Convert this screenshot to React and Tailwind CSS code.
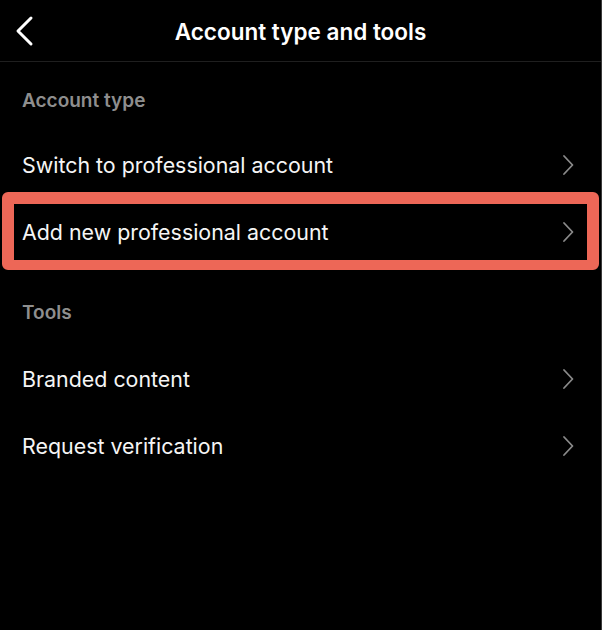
import React from "react";

const font = { fontFamily: "Inter, 'Noto Sans', 'Liberation Sans', sans-serif" };

function ChevronRight() {
  return (
    <svg width="14" height="22" viewBox="0 0 14 22" fill="none" className="shrink-0">
      <path d="M3 2 L11.5 11 L3 20" stroke="#8a8a8a" strokeWidth="1.8" strokeLinecap="round" strokeLinejoin="round" />
    </svg>
  );
}

function BackChevron() {
  return (
    <svg width="24" height="32" viewBox="0 0 24 32" fill="none">
      <path d="M19 3 L6 16 L19 29" stroke="#ffffff" strokeWidth="3" strokeLinecap="round" strokeLinejoin="round" />
    </svg>
  );
}

function Row({ label, highlighted }) {
  return (
    <div className="relative flex h-[67px] items-center justify-between pl-[22px] pr-[26px]">
      <span className="text-[21.4px] leading-6 text-[#f5f5f5]">{label}</span>
      <ChevronRight />
      {highlighted && (
        <div className="pointer-events-none absolute left-[2px] right-[2px] top-[-6px] bottom-[-5px] rounded-[6px] border-x-[12px] border-t-[12px] border-b-[10px] border-[#ed6757]" />
      )}
    </div>
  );
}

function SectionTitle({ children, className }) {
  return (
    <div className={"px-[22px] " + className}>
      <span className="block text-[19px] font-semibold leading-6 text-[#8e8e8e]">{children}</span>
    </div>
  );
}

export default function App() {
  return (
    <div className="h-[630px] w-[602px] overflow-hidden border-r border-[#3a3a3a] bg-black" style={font}>
      <header className="grid h-[62px] grid-cols-[80px_1fr_80px] items-center border-b border-[#1f1f1f]">
        <div className="flex items-center pl-[12px]">
          <BackChevron />
        </div>
        <h1 className="pt-[2px] text-center text-[22.5px] font-semibold text-white">Account type and tools</h1>
        <div />
      </header>

      <SectionTitle className="pt-[27px] pb-[18px]">Account type</SectionTitle>
      <Row label="Switch to professional account" />
      <Row label="Add new professional account" highlighted />

      <SectionTitle className="pt-[36px] pb-[20px]">Tools</SectionTitle>
      <Row label="Branded content" />
      <Row label="Request verification" />
    </div>
  );
}
